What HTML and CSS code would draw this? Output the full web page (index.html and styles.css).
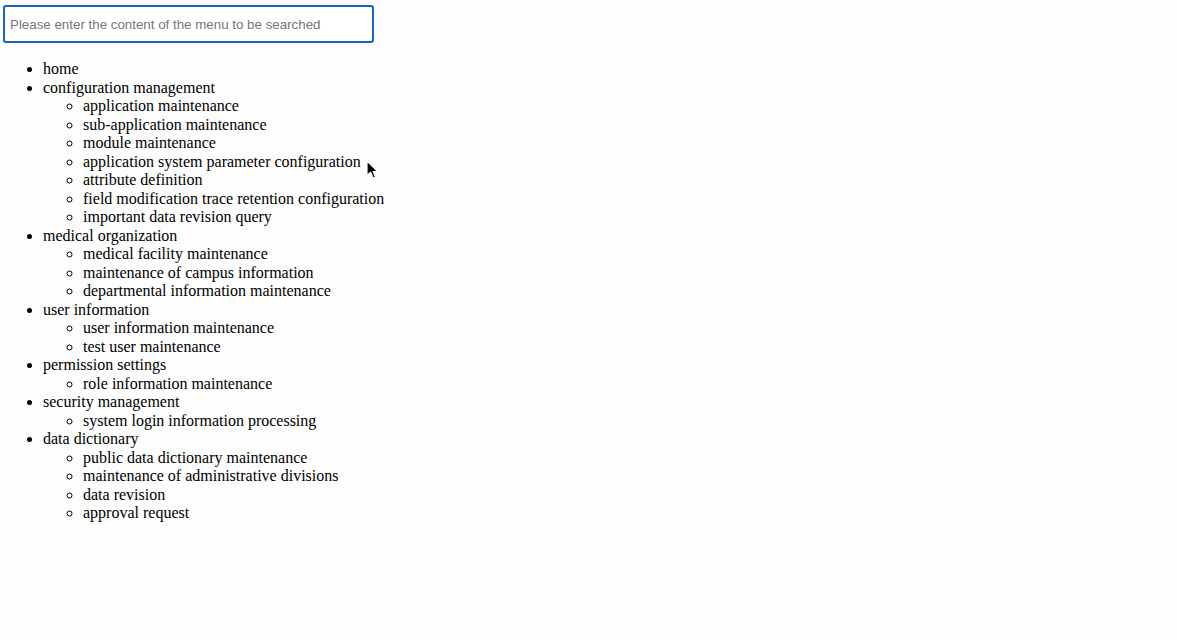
FILE: index.html
```html
<!DOCTYPE html>
<html lang="en">
<head>
<meta charset="utf-8">
<title>Menu search</title>
<link rel="stylesheet" href="styles.css">
</head>
<body>
<div class="page">
  <input class="search" type="text" placeholder="Please enter the content of the menu to be searched" autofocus>
  <ul class="menu">
    <li>home</li>
    <li>configuration management
      <ul>
        <li>application maintenance</li>
        <li>sub-application maintenance</li>
        <li>module maintenance</li>
        <li>application system parameter configuration</li>
        <li>attribute definition</li>
        <li>field modification trace retention configuration</li>
        <li>important data revision query</li>
      </ul>
    </li>
    <li>medical organization
      <ul>
        <li>medical facility maintenance</li>
        <li>maintenance of campus information</li>
        <li>departmental information maintenance</li>
      </ul>
    </li>
    <li>user information
      <ul>
        <li>user information maintenance</li>
        <li>test user maintenance</li>
      </ul>
    </li>
    <li>permission settings
      <ul>
        <li>role information maintenance</li>
      </ul>
    </li>
    <li>security management
      <ul>
        <li>system login information processing</li>
      </ul>
    </li>
    <li>data dictionary
      <ul>
        <li>public data dictionary maintenance</li>
        <li>maintenance of administrative divisions</li>
        <li>data revision</li>
        <li>approval request</li>
      </ul>
    </li>
  </ul>
</div>
<svg class="pointer" width="14" height="20" viewBox="0 0 14 20" aria-hidden="true">
  <path d="M1 1 L1 15.5 L4.6 12.3 L7.2 18.2 L9.6 17.2 L7.1 11.5 L11.8 11.5 Z" fill="#000" stroke="#fff" stroke-width="1.2" stroke-linejoin="round"/>
</svg>
</body>
</html>
```
FILE: styles.css
```css
html, body {
  margin: 0;
  background: #fdfdfd;
}
body {
  font-family: "Liberation Serif", "Times New Roman", serif;
  font-size: 16px;
  line-height: 18.5px;
  color: #000;
}
.page {
  padding: 5px 3px;
}
.search {
  display: block;
  box-sizing: border-box;
  width: 371px;
  height: 38px;
  margin: 0;
  padding: 0 5px;
  border: 2px solid #1565c8;
  border-radius: 3px;
  background: #fff;
  font-family: "Liberation Sans", Arial, sans-serif;
  font-size: 13.333px;
  color: #222;
  outline: none;
}
.search::placeholder {
  color: #767676;
}
.menu {
  margin: 17px 0 16px;
  padding-left: 40px;
  list-style: disc;
}
.menu ul {
  margin: 0;
  padding-left: 40px;
  list-style: circle;
}
.pointer {
  position: absolute;
  left: 366px;
  top: 160px;
}
```
